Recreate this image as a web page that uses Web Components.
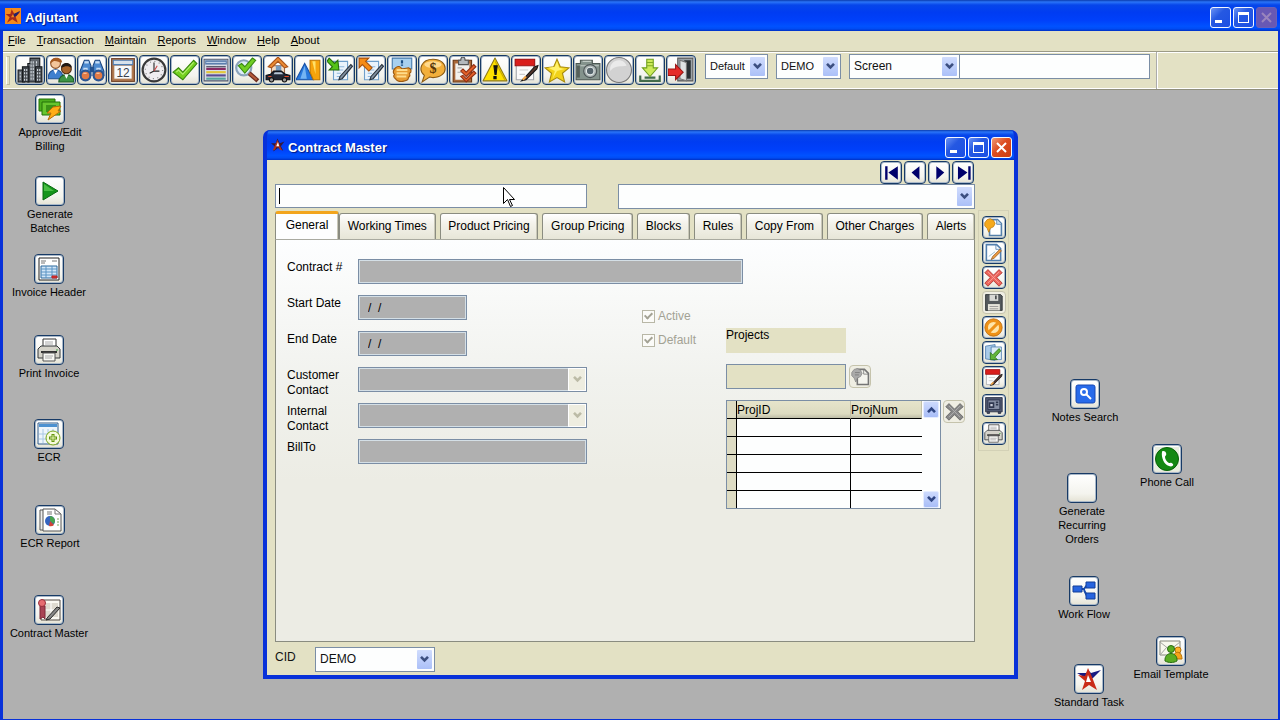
<!DOCTYPE html>
<html lang="en">
<head>
<meta charset="utf-8">
<meta name="viewport" content="width=device-width, initial-scale=1">
<title>Adjutant</title>
<style>
  body { margin: 0; font: 12px/15px "Liberation Sans", Arial, sans-serif; color: #111; }
</style>
</head>
<body>
<adjutant-app></adjutant-app>

<script>
const FACE = '#e3e1c4';

/* Every icon is drawn on a 24 x 24 grid. */
const PAPER_PEN = `<path d="M6 4h13v17H6z" fill="#eaf3fb" stroke="#6f9fcb"/><path d="M9 9h7M9 12h6M9 15h4M9 18h5" stroke="#8db6dc"/><path d="M12 18 22 7l1.500 1.500L14 20l-3 1z" fill="#7f8fa0" stroke="#29323c"/>`;
const ICONS = {
  logo: `<path d="M0 0h24v24H0z" fill="#f58a1c"/><path d="M10 2 14 9l9-3-7 7 3 9-8-5-8 5 4-8-6-5h7z" fill="#a52a1b"/><path d="M13 9 23 4l-6 8-5 2z" fill="#20206c"/><path d="m9 14 3-5 2 5z" fill="#f58a1c"/>`,
  star2: `<path d="M11 1 15 9l8-3-6 8 4 8-9-5-8 6 2-9-6-5h8z" fill="#321a40"/><path d="M11 3 15 13l4 8-4-1-2-4H9l-2 4-4 1z" fill="#a83222"/><path d="m9 14 3-7 2 7z" fill="#fff"/>`,
  city: `<path d="M1 23V12h6v11zM10 23V6h2V1h9v22z" fill="#60666c" stroke="#15191c"/><path d="M5 23V9h6v14zM17 23V9h6v14z" fill="#42474c" stroke="#15191c"/><path d="M3 14v7M7 11v11M9 11v11M13 4v17M15 4v17M18 4v4M19 11v11M21 11v11" stroke="#d5dce2" stroke-dasharray="2 1"/>`,
  people: `<circle cx="7" cy="6" r="4.500" fill="#f3c69b" stroke="#8c5229"/><path d="M2 6c0-7 11-7 11-1-3 0-6-2-8-1z" fill="#a55a21"/><path d="M0 20c0-11 14-11 14 0z" fill="#3f80cf" stroke="#205192"/><path d="m5 12 2 4 2-4z" fill="#fff"/><circle cx="17" cy="11" r="4.500" fill="#a8652c" stroke="#4d2a10"/><path d="M12 10c0-6 10-6 10 0-3-2-6-2-10 0z" fill="#211a16"/><path d="M10 23c0-9 14-9 14 0z" fill="#3d9445" stroke="#1c5c27"/><path d="m15 16 2 4 2-4z" fill="#fff"/>`,
  binoculars: `<path d="M5 3h4l2 5v9H1v-4zM19 3h-4l-2 5v9h10v-4z" fill="#4c8ad0" stroke="#1c467f"/><path d="M10 9h4v5h-4z" fill="#24528e"/><path d="M5 5h4M15 5h4M4 11h4M16 11h4" stroke="#c6ddf5" stroke-width="2"/><circle cx="6" cy="17" r="4.500" fill="#e27a45" stroke="#2d5793" stroke-width="2"/><circle cx="18" cy="17" r="4.500" fill="#e27a45" stroke="#2d5793" stroke-width="2"/><path d="M4 15h3M16 15h3" stroke="#fbd5b7"/>`,
  calendar: `<rect x="1.500" y="1.500" width="21" height="21" fill="#b07a50" stroke="#704126"/><path d="M4 8h16v12H4z" fill="#f7fafc"/><path d="M3 3h18v4H3z" fill="#d7e2ec" stroke="#4f80b6"/><text x="12" y="18" text-anchor="middle" font-size="11" fill="#39424d">12</text>`,
  clock: `<circle cx="12" cy="12" r="10.500" fill="#efedf0" stroke="#393939" stroke-width="2"/><circle cx="12" cy="12" r="8" fill="none" stroke="#888" stroke-dasharray="1 3.200"/><path d="M12 5v8h5M12 13l-4 2" stroke="#222" fill="none"/><path d="m12 13 3-5" stroke="#c44"/>`,
  check: `<path d="m1 14 5-4 4 4L20 3l3 3-13 15z" fill="#74d01f" stroke="#37850d"/><path d="m4 14 2-2 4 4L20 5" fill="none" stroke="#b6ef74"/>`,
  lines: `<path d="M1 2h22v20H1z" fill="#d9dde6" stroke="#4e586f"/><path d="M2 3h20v4H2z" fill="#5c7fae"/><path d="M3 5h18" stroke="#c3d5ea"/><path d="M3 9h18" stroke="#3a3c4f"/><path d="M3 11h18" stroke="#8a2b65" stroke-width="2"/><path d="M3 14h18" stroke="#e2c73a" stroke-width="2"/><path d="M3 17h18" stroke="#5b4c94" stroke-width="2"/><path d="M3 20h18" stroke="#56a69c" stroke-width="2"/>`,
  searchcheck: `<circle cx="9" cy="10" r="7" fill="#deedf9" stroke="#8ba4bb" stroke-width="2"/><path d="m14 15 8 7" stroke="#6c2d20" stroke-width="4"/><path d="m14 15 7 6" stroke="#b65b39" stroke-width="2"/><path d="m4 8 3-2 3 3 7-8 3 2-10 12z" fill="#71ce25" stroke="#38880f"/>`,
  housecar: `<path d="M6 8h12v8H6z" fill="#f4dcc3" stroke="#9b694b"/><path d="M3 9 12 0l9 9-3 1-6-6-6 6z" fill="#ec8c34" stroke="#aa541a"/><path d="M10 8h5v5h-5z" fill="#769bbf"/><path d="M1 21v-4l4-1 3-3h7l4 3 4 1v4z" fill="#222734" stroke="#0c0e14"/><path d="m8 16 1-2h6l2 2z" fill="#b7c6d5"/><circle cx="6" cy="21" r="2" fill="#999" stroke="#111"/><circle cx="18" cy="21" r="2" fill="#999" stroke="#111"/><path d="M3 18h3M18 18h4" stroke="#e64c29"/>`,
  shapes: `<path d="m0 21 8-15 8 15z" fill="#2878dd" stroke="#1751a7"/><path d="m8 8 2 12H4z" fill="#75b4f3"/><path d="M13 3h9v18h-6l-3-7z" fill="#f6a30c" stroke="#bf7704"/><path d="M15 4h3v12z" fill="#ffe16b"/>`,
  docin: `${PAPER_PEN}<path d="m2 1 5 5 3-3 1 9H2l3-3-5-5z" fill="#55c318" stroke="#256e0a"/>`,
  docout: `${PAPER_PEN}<path d="M1 1h9L7 4l6 6-3 3-6-6-3 3z" fill="#f58c16" stroke="#a6500c"/>`,
  coins: `<path d="M3 1h18v10H3z" fill="#a8d0ef" stroke="#4579ab"/><path d="M12 3v3M12 7v1" stroke="#194d85" stroke-width="2"/><path d="M6 10c3-3 5 0 6 1l6-1c3 1 3 4 1 5 1 2 0 3-1 4 0 4-10 5-12 1-2-1-2-3-1-4-2-2-1-4 1-6z" fill="#e79b31" stroke="#9a570e"/><path d="M7 12h10M7 15h10M7 18h9" stroke="#ffdc8b" stroke-width="2"/>`,
  dollar: `<path d="M12 2c15 0 15 17 0 17-2 0-3-1-4 0l-6 4 2-6C-2 12 1 2 12 2z" fill="#f2af3b" stroke="#8b5a12"/><ellipse cx="12" cy="7" rx="8" ry="3" fill="#ffd98d"/><text x="12" y="15" text-anchor="middle" font-size="13" font-weight="bold" fill="#583507" font-family="Liberation Serif">$</text>`,
  clipboard: `<path d="M2 3h17v20H2z" fill="#a96839" stroke="#693613"/><path d="M4 6h13v15H4z" fill="#f3f1ed"/><path d="M7 3h2c0-4 4-4 4 0h3v4H7z" fill="#b4b9bd" stroke="#555"/><path d="M6 10h4M6 14h4" stroke="#aaa"/><path d="m11 11 3 3 7-7 2 2-9 9-5-5zM11 17l3 3 7-7 2 2-9 8-5-5z" fill="#e4622a" stroke="#933014"/>`,
  warning: `<path d="m12 1 11 21H1z" fill="#ffe100" stroke="#8f7a12" stroke-linejoin="round"/><path d="m12 4 9 17" stroke="#c8a900"/><path d="M11 8h3l-1 8h-1zM11 18h2v2h-2z" fill="#111" stroke="#111"/>`,
  notepen: `<path d="M3 3h16v18H3z" fill="#fbfbfb" stroke="#a1a5aa"/><path d="M2 2h18v6H2z" fill="#d91e1c" stroke="#9c1010"/><path d="M6 12h8M6 16h5" stroke="#ccc"/><path d="M10 20 20 9l3-1-1 3-10 10-4 1z" fill="#53352b" stroke="#161616"/><path d="m9 21 3-3" stroke="#efa648" stroke-width="2"/>`,
  star: `<path d="m12 2 3 7 8 1-6 5 2 8-7-4-7 4 2-8-6-5 8-1z" fill="#f2d219" stroke="#a88b0b"/><path d="m12 4 2 6 5 1-7 2-4 7 2-7-6-3 6-1z" fill="#fff16a"/>`,
  camera: `<path d="M1 6h4V3h11v3h7v15H1z" fill="#84938c" stroke="#4d5853"/><path d="M7 4h8M5 8h17" stroke="#c1cbc5"/><circle cx="14" cy="13" r="6" fill="#aab4b2" stroke="#4d5657"/><circle cx="14" cy="13" r="3.500" fill="#56656c" stroke="#e4eaea"/><path d="M3 8v11" stroke="#56605b" stroke-width="3"/>`,
  disc: `<circle cx="12" cy="12" r="11.500" fill="#d2d2d2" stroke="#777"/><path d="M12 3C6 3 3 8 4 13 8 7 14 9 19 8c-1-3-4-5-7-5z" fill="#eaeaea"/>`,
  download: `<path d="M3 17v5h18v-5M7 19h10" fill="none" stroke="#426b4b" stroke-width="2"/><path d="M9 2h6v8h4l-7 8-7-8h4z" fill="#cdea59" stroke="#6f9f1f"/><path d="M9 5h6M9 8h6" stroke="#7ea922"/>`,
  exit: `<path d="M9 1h14v21H9z" fill="#9ca3a8" stroke="#555"/><path d="M15 3h6v17h-6z" fill="#2a3034"/><path d="m11 3 6 2v17l-6-2z" fill="#dfe2e3" stroke="#777"/><path d="M0 11h7V7l7 7-7 7v-4H0z" fill="#e52c28" stroke="#9b1513"/>`,
  cash: `<path d="M1 2h16v12H1z" fill="#4cae1d" stroke="#237108"/><path d="M4 5h18v13H4z" fill="#67c52e" stroke="#237108"/><path d="M8 8h10v7H8z" fill="#3b9217"/><path d="m15 10 8-1-3 5h3L10 23l3-7H9z" fill="#ffad16" stroke="#b66a08"/>`,
  play: `<path d="m5 3 15 9-15 9z" fill="#15951a" stroke="#086b10"/><path d="m6 5 10 7H6z" fill="#48bd42"/>`,
  invoice: `<path d="M2 1h20v22H2z" fill="#fff" stroke="#222"/><path d="M4 4h5M15 4h5M4 6h4" stroke="#777"/><path d="M4 9h16v12H4z" fill="#d2e6f8" stroke="#29669b"/><path d="M4 12h16M9 9v12M15 9v12M4 15h16M4 18h16" stroke="#5a94c4"/><path d="M15 19h5v2h-5z" fill="#d33" stroke="#b22"/>`,
  printer: `<path d="M6 9V1h13v8" fill="#fff" stroke="#333"/><path d="M8 4h8M8 6h8" stroke="#aaa"/><path d="m1 11 3-3h16l3 3v9H1z" fill="#d5d3ca" stroke="#34383b"/><path d="M4 14h16" stroke="#343434" stroke-width="2"/><path d="M6 15h12v8H6z" fill="#f8f8f4" stroke="#555"/><path d="M8 18h8M8 20h7" stroke="#aaa"/><path d="M19 12h2" stroke="#47a84b"/>`,
  tableplus: `<path d="M1 1h20v21H1z" fill="#eef5fb" stroke="#355e8c"/><path d="M2 2h18v3H2z" fill="#4c91d1"/><path d="M6 7v14M11 7v14M16 7v14M2 12h18M2 17h18" stroke="#a8c8e4"/><circle cx="16" cy="16" r="7" fill="#f5f9dd" stroke="#77a51a"/><path d="M16 12v8M12 16h8" stroke="#61930b" stroke-width="3"/><path d="M16 13v6M13 16h6" stroke="#e9f6b8"/>`,
  report: `<path d="M2 2h14v20H2z" fill="#eee" stroke="#555"/><path d="M5 1h12l6 5v17H5z" fill="#fff" stroke="#555"/><path d="M17 1v5h6M9 4h5M9 6h5" fill="none" stroke="#777"/><circle cx="12" cy="13" r="5" fill="#3464bf"/><path d="M12 13V8a5 5 0 0 1 4 8z" fill="#48a34c"/><path d="m12 13 4 4a5 5 0 0 1-5 1z" fill="#d14335"/><path d="M19 11h2M19 14h2M19 17h2" stroke="#7ba75b"/>`,
  contract: `<path d="M4 2h19v20H4z" fill="#faf9f3" stroke="#534b44"/><path d="M8 5h13v14H8z" fill="#dedad0"/><path d="M14 5v14M8 12h13" stroke="#fff"/><path d="M3 8h5v13l-2-2-3 2z" fill="#a94354" stroke="#7c2939"/><circle cx="5" cy="5" r="3.500" fill="#e66c71" stroke="#992f3c"/><path d="m10 20 10-11 3 1-10 11-4 1z" fill="#888" stroke="#292929"/>`,
  notes: `<rect x="3" y="3" width="19" height="18" rx="2" fill="#286bea" stroke="#1749b4"/><circle cx="11" cy="10" r="3" fill="none" stroke="#fff" stroke-width="2"/><path d="m13 12 5 5" stroke="#fff" stroke-width="2"/>`,
  phone: `<path d="M0 0h24v24H0z" fill="#e8eee0"/><circle cx="12" cy="12" r="11.500" fill="#138812" stroke="#086008"/><path d="M7 5c0-2 4-1 4 1 1 2-1 3-1 4 0 2 2 5 4 6 1 0 2-1 4 1 1 2-2 3-4 2C9 18 6 10 7 5z" fill="#fff"/>`,
  blank: ``,
  flow: `<path d="M9 10h3l3-4M12 11l3 6h3" fill="none" stroke="#1749aa" stroke-width="2"/><path d="M1 7h9v6H1zM14 3h9v6h-9zM14 14h9v6h-9z" fill="#2764df" stroke="#123f98"/>`,
  email: `<path d="M1 2h20v14H1z" fill="#f8f8ed" stroke="#83867b"/><path d="m1 3 10 8L21 3M1 16l7-8M21 16l-7-8" fill="none" stroke="#a4a5a0"/><circle cx="19" cy="11" r="3" fill="#ffb52a" stroke="#b97206"/><path d="M14 20c0-9 9-9 9 0z" fill="#f6a31b" stroke="#b97206"/><circle cx="12" cy="10" r="3.500" fill="#5bad22" stroke="#286d12"/><path d="M6 22c-1-10 13-10 12 0-4 2-8 2-12 0z" fill="#5bad22" stroke="#286d12"/>`,
  task: `<path d="M0 6h9l3-2 2 2 10-3-8 8-4 2z" fill="#191b82"/><path d="M11 1 15 10l5 13-8-5-7 5 3-9-7-6 7 1z" fill="#c92b17"/><path d="m9 15 2-7 3 7z" fill="#fff"/>`,
  newdoc: `<path d="M7 2h10l5 5v15H7z" fill="#fff" stroke="#5580ab" stroke-width="2"/><path d="M16 2v6h6" fill="#c6dff4" stroke="#5580ab"/><path d="M1 6 4 2l4-1 4 2 2 4-2 4-4 2-2 5-2-5-3-3z" fill="#f5a91c" stroke="#c07d12"/>`,
  editdoc: `<path d="M3 2h13l5 5v15H3z" fill="#fbfdff" stroke="#527fae" stroke-width="2"/><path d="M15 2v6h6" fill="none" stroke="#527fae"/><path d="m6 17 8-6" stroke="#88b2c8"/><path d="m9 21 2-4 9-9 2 2-9 9z" fill="#ef9c40" stroke="#8f5b28"/>`,
  remove: `<path d="m5 2 7 7 7-7 4 4-7 6 7 7-4 4-7-7-7 7-4-4 7-7-7-6z" fill="#ec665d" stroke="#aa2925"/><path d="m5 5 14 14M19 5 5 19" stroke="#f9a49c"/>`,
  save: `<path d="M2 2h19l2 2v18H2z" fill="#555a5d" stroke="#24282b"/><path d="M7 2h11v8H7z" fill="#d8d9d5"/><path d="M14 3h2v5h-2z" fill="#3f4345"/><path d="M5 14h15v8H5z" fill="#e9e7dd"/><path d="M7 17h11M7 20h11" stroke="#888"/>`,
  cancel: `<circle cx="12" cy="12" r="9" fill="#ffe5a8" stroke="#ef9217" stroke-width="4"/><path d="M6 18 18 6" stroke="#ef9217" stroke-width="4"/><circle cx="12" cy="12" r="11" fill="none" stroke="#b7680d"/>`,
  importdoc: `<path d="m2 4 12-2v20l-12-2z" fill="#a9cbe9" stroke="#497aac"/><path d="M9 5h13v16H9z" fill="#dcecf7" stroke="#497aac"/><path d="m19 7-8 8-3-3v9h9l-3-3 7-8z" fill="#62b53a" stroke="#287016"/>`,
  safe: `<path d="M2 2h21v18H2zM4 20v2h3v-2M18 20v2h3v-2" fill="#4f5870" stroke="#23283c"/><path d="M5 5h15v12H5z" fill="#8790a5" stroke="#252c45"/><path d="M7 9h5v5H7zM15 8h3M15 11h3" fill="#c9cddb" stroke="#303850" stroke-width="2"/>`,
  newdocgray: `<path d="M8 3h9l5 5v14H8z" fill="#f4f4ee" stroke="#757575" stroke-width="2"/><path d="M16 3v6h6" fill="none" stroke="#757575"/><path d="M1 7 4 3l4-1 4 2 2 4-2 4-4 2-2 5-2-5-3-3z" fill="#aaa" stroke="#888"/><path d="M5 7h6M5 10h5" stroke="#777"/>`,
  removegray: `<path d="m5 2 7 7 7-7 4 4-7 6 7 7-4 4-7-7-7 7-4-4 7-7-7-6z" fill="#888" stroke="#5f5f5f"/><path d="m5 5 14 14M19 5 5 19" stroke="#b5b5b5"/>`,
  first: `<path d="M4 4h3v17H4zM20 4v17L8 12z" fill="#00006c"/>`,
  prev: `<path d="M17 4v17L7 12z" fill="#00006c"/>`,
  next: `<path d="M8 4v17l10-9z" fill="#00006c"/>`,
  last: `<path d="M18 4h3v17h-3zM5 4v17l12-9z" fill="#00006c"/>`
};
const svg = name => `<svg viewBox="0 0 24 24" aria-hidden="true">${ICONS[name] || ''}</svg>`;
const CHEVRON = `<svg viewBox="0 0 10 8" aria-hidden="true"><path d="m1 1 4 4 4-4" fill="none" stroke="currentColor" stroke-width="3"/></svg>`;

class Base extends HTMLElement {
  connectedCallback() {
    if (this.shadowRoot) return;
    this.attachShadow({ mode: 'open' }).innerHTML =
      `<style>*{box-sizing:border-box} button,input,select{font:inherit;color:inherit;margin:0}${this.css()}</style>${this.html()}`;
  }
  attr(n, d = '') { return this.getAttribute(n) ?? d; }
}

/* Rounded push button with an icon */
customElements.define('icon-button', class extends Base {
  css() { return `
    :host { display:block; flex:none; width:var(--bw,30px); height:var(--bh,30px); }
    button { display:grid; place-items:center; width:100%; height:100%; padding:0; border:1px solid #173a66; border-radius:4px;
      background:linear-gradient(#fff,#f4f4ee 70%,#e4e2d4); box-shadow:inset 0 0 0 1px #a9b8c8; }
    button:disabled { border-color:#c5c3ac; background:#efeee3; box-shadow:none; }
    svg { display:block; width:var(--bi,24px); height:var(--bi,24px); }`; }
  html() { return `<button type="button" aria-label="${this.attr('label')}" ${this.hasAttribute('disabled') ? 'disabled' : ''}>${svg(this.attr('icon'))}</button>`; }
});

/* Drop-down list */
customElements.define('xp-select', class extends Base {
  css() { return `
    :host { display:flex; height:25px; }
    .box { position:relative; flex:1; min-width:0; border:1px solid #7b8ea5; background:#fdfefe; }
    select { appearance:none; display:block; width:100%; height:100%; border:0; padding:0 20px 0 4px; background:none; border-radius:0; opacity:1; outline:0; }
    .arrow { position:absolute; right:2px; top:2px; bottom:2px; width:15px; display:grid; place-items:center; pointer-events:none;
      color:#3c4f80; background:linear-gradient(#d0dcfd,#abc0f8); border-radius:1px; }
    svg { width:9px; height:7px; }`; }
  html() { return `<span class="box"><select aria-label="${this.attr('label')}"><option>${this.attr('value')}</option></select><span class="arrow">${CHEVRON}</span></span>`; }
});

/* Label and read-only field of the form */
customElements.define('form-field', class extends Base {
  css() { return `
    :host { display:flex; height:36px; align-items:flex-start; }
    label { flex:none; width:71px; padding-top:1px; }
    .box { position:relative; display:block; width:var(--fw,229px); height:25px; }
    input, select { appearance:none; display:block; width:100%; height:100%; padding:0 9px; border:1px solid #7b8ea5; border-radius:0;
      background:#b0b0b0; box-shadow:inset 0 0 0 1px #d4dfe6; color:#000; opacity:1; white-space:pre; }
    .arrow { position:absolute; right:1px; top:1px; bottom:1px; width:18px; display:grid; place-items:center; pointer-events:none;
      color:#bcbba6; background:#eeede0; border:1px solid #fff; }
    svg { width:9px; height:7px; }`; }
  html() {
    const control = this.hasAttribute('list-box')
      ? `<select id="f" disabled><option></option></select><span class="arrow">${CHEVRON}</span>`
      : `<input id="f" disabled value="${this.attr('value')}">`;
    return `<label for="f">${this.attr('label')}</label><span class="box">${control}</span>`;
  }
});

/* Blue caption bar */
customElements.define('title-bar', class extends Base {
  css() { return `
    :host { display:flex; align-items:center; height:30px; padding:0 var(--pr,6px) 0 var(--pl,8px); color:#fff;
      background:linear-gradient(#0a3cae 0,#2a74f8 2px,#0646ea 5px,#003cf2 40%,#0040fa 65%,#0052ff 85%,#004cf4 93%,#0030c4); }
    .icon { width:var(--ti,16px); height:var(--ti,16px); margin-right:var(--tg,4px); }
    .icon svg { display:block; width:100%; height:100%; }
    h1 { flex:1; margin:0; padding-top:5px; font-size:13px; line-height:16px; font-weight:bold; text-shadow:1px 1px 1px #001a80; }
    div { display:flex; gap:2px; padding-top:4px; }
    button { display:grid; place-items:center; width:21px; height:21px; padding:0; border:1px solid #f4f8ff; border-radius:3px;
      background:linear-gradient(135deg,#6b93f4,#2558e2 40%,#1c50e4); }
    button.close { background:linear-gradient(135deg,#f09a76,#dc4c20 45%,#cc3d12); }
    button.close:disabled { border-color:#6a60b8; background:#6858b4; }
    button svg { width:19px; height:19px; }`; }
  html() {
    return `<span class="icon">${svg(this.attr('icon'))}</span><h1>${this.attr('caption')}</h1>
    <div><button type="button" aria-label="Minimize"><svg viewBox="0 0 19 19"><path d="M4 12h7v3H4z" fill="#fff"/></svg></button>
    <button type="button" aria-label="Maximize"><svg viewBox="0 0 19 19"><path d="M4 4h11v11H4zM5 7v7h9V7z" fill="#fff" fill-rule="evenodd"/></svg></button>
    <button type="button" class="close" aria-label="Close" ${this.hasAttribute('locked') ? 'disabled' : ''}><svg viewBox="0 0 19 19"><path d="m5 5 9 9M14 5l-9 9" stroke="${this.hasAttribute('locked') ? '#9a85bd' : '#fff'}" stroke-width="2"/></svg></button></div>`;
  }
});

customElements.define('menu-bar', class extends Base {
  css() { return `
    :host { display:block; background:${FACE}; }
    nav { display:flex; gap:11px; padding:0 5px 2px; font-size:11px; line-height:18px; }
    a { display:block; color:#000; text-decoration:none; }
    a::first-letter { text-decoration:underline; }`; }
  html() { return `<nav>${['File', 'Transaction', 'Maintain', 'Reports', 'Window', 'Help', 'About'].map(t => `<a href="#${t.toLowerCase()}">${t}</a>`).join('')}</nav>`; }
});

customElements.define('tool-bar', class extends Base {
  css() { return `
    :host { display:flex; height:39px; background:${FACE}; border-top:1px solid #9b9a86; border-bottom:1px solid #8f8e7c; box-shadow:inset 0 1px #fff, inset 0 -1px #fff; font-size:11px; }
    .grip { width:4px; margin:4px 5px 4px 3px; border:1px solid #bdbba0; border-left-color:#fff; }
    .buttons { display:flex; gap:1px; padding-top:3px; margin-right:9px; --bi:26px; }
    .combos { display:flex; padding:2px 6px 0 0; border-right:2px groove #fff; }
    .a { width:63px; margin-right:8px; } .b { width:65px; margin-right:8px; } .c { width:111px; font-size:12px; }
    input { width:190px; height:25px; border:1px solid #7b8ea5; border-left:0; background:#fdfefe; padding:0 4px; }`; }
  html() {
    const tools = ['city:Company', 'people:Contacts', 'binoculars:Find', 'calendar:Calendar', 'clock:Time', 'check:Approve', 'lines:List', 'searchcheck:Inspect', 'housecar:Travel', 'shapes:Shapes', 'docin:Check in', 'docout:Check out', 'coins:Payments', 'dollar:Quotes', 'clipboard:Tasks', 'warning:Alerts', 'notepen:Notes', 'star:Favorites', 'camera:Capture', 'disc:Record', 'download:Download', 'exit:Exit'];
    return `<span class="grip"></span><div class="buttons">${tools.map(t => { const [i, l] = t.split(':'); return `<icon-button icon="${i}" label="${l}"></icon-button>`; }).join('')}</div>
    <div class="combos"><xp-select class="a" label="Layout" value="Default"></xp-select><xp-select class="b" label="Company" value="DEMO"></xp-select><xp-select class="c" label="Search in" value="Screen"></xp-select><input aria-label="Search text"></div>`;
  }
});

/* Shortcut on the desktop: the caption is slotted under the icon */
customElements.define('desk-icon', class extends Base {
  css() { return `
    :host { display:flex; flex-direction:column; align-items:center; gap:1px; width:90px; text-align:center; font-size:11px; line-height:14px; color:#000; }`; }
  html() { return `<icon-button icon="${this.attr('icon')}" label="${this.textContent.trim()}"></icon-button><span><slot></slot></span>`; }
});

customElements.define('tab-strip', class extends Base {
  css() { return `
    :host { display:flex; align-items:flex-end; gap:4px; height:28px; }
    button { flex:auto; height:26px; padding:0 6px; border:1px solid #8a8c80; border-bottom:0; border-radius:3px 3px 0 0; white-space:nowrap; color:#000;
      background:linear-gradient(#fff,#f3f2ea 40%,#e7e6d8); box-shadow:inset -1px 0 #c9c8b8; }
    button[aria-selected=true] { flex:none; width:64px; height:28px; margin-right:-4px; padding:0 6px 3px; border-top:3px solid #f2a51c; background:#fdfefe; }`; }
  html() { return ['General', 'Working Times', 'Product Pricing', 'Group Pricing', 'Blocks', 'Rules', 'Copy From', 'Other Charges', 'Alerts'].map((t, i) => `<button type="button" role="tab" aria-selected="${i === 0}">${t}</button>`).join(''); }
  connectedCallback() { super.connectedCallback(); this.setAttribute('role', 'tablist'); }
});

customElements.define('project-grid', class extends Base {
  css() { return `
    :host { display:flex; width:215px; height:109px; border:1px solid #7b8ea5; background:#fdfefe; }
    table { flex:none; width:195px; table-layout:fixed; border-collapse:separate; border-spacing:0; }
    th, td { height:18px; padding:0; border-right:1px solid #000; border-bottom:1px solid #000; line-height:16px; overflow:hidden; }
    th { font-weight:normal; text-align:left; background:linear-gradient(#e6e4cb,#dddbc0 75%,#bdbca6); border-right-color:#c2c0a8; color:#000; }
    th:first-child, td:first-child { width:10px; background:#dedcc4; border-right-color:#000; }
    th:nth-child(2), td:nth-child(2) { width:114px; }
    td:last-child { border-right:0; }
    tr:last-child td { border-bottom:0; height:17px; }
    thead tr:last-child th { height:18px; }
    .scroll { flex:1; display:flex; flex-direction:column; justify-content:space-between; }
    button { width:16px; height:17px; margin:0 1px; padding:0; border:1px solid #e4ecff; border-radius:2px; display:grid; place-items:center; color:#2f4683; background:linear-gradient(#cddafd,#a8bdf7); }
    svg { width:9px; height:7px; } .up svg { transform:rotate(180deg); }`; }
  html() { return `<table><thead><tr><th></th><th>ProjID</th><th>ProjNum</th></tr></thead><tbody>${'<tr><td></td><td></td><td></td></tr>'.repeat(5)}</tbody></table>
    <div class="scroll"><button type="button" class="up" aria-label="Scroll up">${CHEVRON}</button><button type="button" aria-label="Scroll down">${CHEVRON}</button></div>`; }
});

customElements.define('record-tools', class extends Base {
  css() { return `
    :host { display:flex; flex-direction:column; align-items:center; gap:2px; padding:5px 2px; border:1px solid #d3d1b6; --bw:24px; --bh:23px; --bi:19px; }
    .wide { margin-top:3px; }`; }
  html() { return `<icon-button icon="newdoc" label="New"></icon-button><icon-button icon="editdoc" label="Edit"></icon-button><icon-button icon="remove" label="Delete"></icon-button><icon-button icon="save" label="Save" disabled></icon-button><icon-button icon="cancel" label="Cancel"></icon-button><icon-button icon="importdoc" label="Import"></icon-button><icon-button icon="notepen" label="Notes"></icon-button><icon-button class="wide" icon="safe" label="Vault"></icon-button><icon-button class="wide" icon="printer" label="Print"></icon-button>`; }
});

customElements.define('general-panel', class extends Base {
  css() { return `
    :host { display:block; padding:19px 8px 0 11px; border:1px solid #8a8c80; border-top-color:#a9aaa0; background:linear-gradient(#fdfeff,#f1f2ee 35%,#ecece4 60%); color:#000; }
    .wide { --fw:385px; } .date { --fw:109px; }
    .body { display:flex; align-items:flex-start; }
    .fields { width:300px; }
    .checks { width:84px; margin:14px 0 0 55px; display:flex; flex-direction:column; gap:10px; color:#a3a294; }
    .checks label { display:flex; align-items:center; gap:3px; line-height:14px; }
    .checks input { appearance:none; width:13px; height:13px; border:1px solid #b8b7a6; background:#fbfbf8; display:grid; place-items:center; }
    .checks input::before { content:""; width:3px; height:6px; margin-top:-2px; border:solid #a3a294; border-width:0 2px 2px 0; transform:rotate(45deg); }
    .projects { flex:1; margin-top:33px; --bw:22px; --bh:23px; --bi:19px; }
    .caption { display:block; width:120px; height:25px; background:${FACE}; }
    .row { display:flex; align-items:center; gap:3px; margin:11px 0; }
    .row input { width:120px; height:25px; border:1px solid #7b8ea5; background:${FACE}; }
    .table { display:flex; align-items:flex-start; gap:2px; }`; }
  html() { return `
    <form-field class="wide" label="Contract #"></form-field>
    <div class="body">
      <div class="fields">
        <form-field class="date" label="Start Date" value="/  /"></form-field>
        <form-field class="date" label="End Date" value="/  /"></form-field>
        <form-field list-box label="Customer Contact"></form-field>
        <form-field list-box label="Internal Contact"></form-field>
        <form-field label="BillTo"></form-field>
      </div>
      <div class="checks"><label><input type="checkbox" checked disabled>Active</label><label><input type="checkbox" checked disabled>Default</label></div>
      <div class="projects">
        <label class="caption" for="project">Projects</label>
        <div class="row"><input id="project" disabled><icon-button icon="newdocgray" label="Add project" disabled></icon-button></div>
        <div class="table"><project-grid></project-grid><icon-button icon="removegray" label="Remove project" disabled></icon-button></div>
      </div>
    </div>`; }
});

customElements.define('contract-window', class extends Base {
  css() { return `
    :host { display:flex; flex-direction:column; border:solid #0831d9; border-width:0 4px 4px; border-radius:7px 7px 0 0; background:#0831d9; overflow:hidden; }
    title-bar { margin:0 -4px; --pl:8px; --pr:6px; --ti:14px; --tg:3px; }
    .client { flex:1; display:grid; grid-template-columns:minmax(0,1fr) 31px; grid-template-rows:auto 1fr; column-gap:3px; padding:1px 5px 3px 8px; background:${FACE}; }
    .nav { display:flex; justify-content:flex-end; gap:2px; --bw:22px; --bh:23px; --bi:19px; padding-right:1px; }
    .search { display:flex; gap:31px; height:25px; margin-bottom:2px; }
    .find { position:relative; width:312px; }
    .find input { display:block; width:100%; height:24px; border:1px solid #7b8ea5; background:#fdfefe; padding:0 4px; outline:0; }
    .caret { position:absolute; left:4px; top:4px; width:1px; height:16px; background:#000; }
    .search xp-select { flex:1; }
    .main { grid-row:1 / 3; display:flex; flex-direction:column; }
    general-panel { flex:1; }
    .foot { display:flex; gap:20px; height:25px; margin-top:5px; }
    .foot span { padding-top:2px; line-height:16px; width:20px; }
    .foot xp-select { width:120px; }
    record-tools { grid-column:2; margin:49px 0 190px; }`; }
  html() { return `
    <title-bar icon="star2" caption="Contract Master"></title-bar>
    <div class="client">
      <div class="main">
        <div class="nav"><icon-button icon="first" label="First"></icon-button><icon-button icon="prev" label="Previous"></icon-button><icon-button icon="next" label="Next"></icon-button><icon-button icon="last" label="Last"></icon-button></div>
        <div class="search"><span class="find"><input aria-label="Contract"><span class="caret"></span></span><xp-select label="Contract description"></xp-select></div>
        <tab-strip></tab-strip>
        <general-panel></general-panel>
        <div class="foot"><span>CID</span><xp-select label="CID" value="DEMO"></xp-select></div>
      </div>
      <record-tools></record-tools>
    </div>`; }
});

customElements.define('desk-top', class extends Base {
  css() { return `
    :host { display:block; position:relative; flex:1; min-height:600px; background:#b0b0b0; overflow:hidden; }
    desk-icon, contract-window, .pointer { position:absolute; left:var(--x); top:var(--y); }
    contract-window { width:755px; height:549px; }
    .pointer { width:12px; height:20px; pointer-events:none; }`; }
  html() {
    const items = [
      ['cash', 'Approve/Edit Billing', 2, 4], ['play', 'Generate<br>Batches', 2, 86], ['invoice', 'Invoice Header', 1, 164],
      ['printer', 'Print Invoice', 1, 245], ['tableplus', 'ECR', 1, 329], ['report', 'ECR Report', 2, 415], ['contract', 'Contract Master', 1, 505],
      ['notes', 'Notes Search', 1037, 289], ['phone', 'Phone Call', 1119, 354], ['blank', 'Generate<br>Recurring<br>Orders', 1034, 383],
      ['flow', 'Work Flow', 1036, 486], ['email', 'Email Template', 1123, 546], ['task', 'Standard Task', 1041, 574]];
    return items.map(([i, t, x, y]) => `<desk-icon icon="${i}" style="--x:${x}px;--y:${y}px">${t}</desk-icon>`).join('') +
      `<contract-window style="--x:260px;--y:40px"></contract-window>
      <svg class="pointer" style="--x:500px;--y:97px" viewBox="0 0 12 20"><path d="M.5.5v16l4-4 3 7 2-1-3-6h5z" fill="#fff" stroke="#000"/></svg>`;
  }
});

customElements.define('adjutant-app', class extends Base {
  css() { return `
    :host { display:flex; flex-direction:column; min-height:100vh; box-sizing:border-box; border:solid #0831d9; border-width:0 2px 1px 3px; }
    title-bar { height:31px; margin:0 -2px 0 -3px; --pl:5px; --pr:3px; }`; }
  html() { return `<title-bar icon="logo" caption="Adjutant" locked></title-bar><menu-bar></menu-bar><tool-bar></tool-bar><desk-top></desk-top>`; }
});
</script>
</body>
</html>
